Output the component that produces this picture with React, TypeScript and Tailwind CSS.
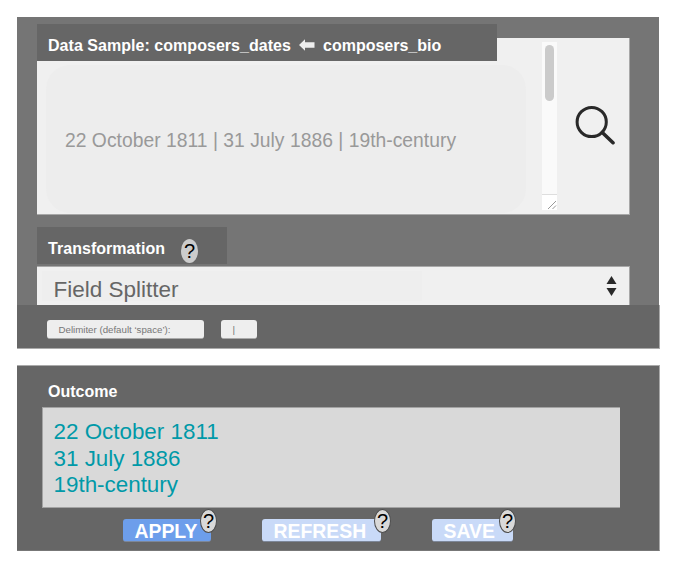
import type { ReactNode } from "react";

function HelpBadge({ className = "" }: { className?: string }) {
  return (
    <button
      aria-label="Help"
      className={`flex h-6 w-[17px] items-center justify-center rounded-[50%] text-[20px] leading-none text-black ${className}`}
    >
      ?
    </button>
  );
}

function ActionButton({
  children,
  className,
  badgeClass,
}: {
  children: ReactNode;
  className: string;
  badgeClass: string;
}) {
  return (
    <div className={`relative h-[23px] rounded-[3px] border-b border-[#7d8798] pl-[11.5px] ${className}`}>
      <span className="block text-[19.4px] font-bold leading-[24px] text-white">{children}</span>
      <HelpBadge className={`absolute -top-[10px] border border-[#4d4d4d] bg-[#d9d9d9] ${badgeClass}`} />
    </div>
  );
}

function Scrollbar() {
  return (
    <div className="flex h-[168px] w-[15px] flex-col bg-[#fafafa]">
      <div className="mx-[3px] mt-[3px] h-14 w-[9px] rounded-full bg-[#cbcbcb]" />
      <div className="mt-auto h-4 border-t border-[#dedede] bg-white">
        <svg className="ml-[5px] mt-[5px]" width="10" height="10" viewBox="0 0 10 10" stroke="#999" strokeWidth="1">
          <path d="M1 9 9 1M5.5 9 9 5.5" />
        </svg>
      </div>
    </div>
  );
}

export default function App() {
  return (
    <main className="h-[574px] w-[700px] overflow-hidden bg-white pl-[17px] pt-[17px] font-['Liberation_Sans',Arial,sans-serif]">
      <section className="flex h-[332px] w-[642px] flex-col bg-[#757575]">
        <h2 className="relative z-10 ml-[19.5px] mt-[7px] flex h-[37px] w-[460px] shrink-0 items-center bg-[#666] pl-[11.5px] pt-[6px] text-[16px] font-bold leading-5 text-white">
          <span className="tracking-[0.04px]">Data Sample: composers_dates</span>
          <svg className="ml-[8px] -mt-[2px]" width="16" height="12" viewBox="0 0 16 12">
            <path d="M0 6 6 0.3V3.2H15.5V8.8H6V11.7Z" fill="#eee" />
          </svg>
          <span className="ml-[8px]">composers_bio</span>
        </h2>
        <div className="-mt-[23px] ml-5 flex h-[177px] w-[593px] shrink-0 border-b border-r border-[#a8a8a8] bg-[#f0f0f0]">
          <div className="ml-[9px] mt-[27px] flex h-[148px] w-[480px] items-center rounded-[24px] bg-[#ededed] pl-[19px] text-[19.3px] leading-6 text-[#999]">
            <p className="mt-[3px] whitespace-nowrap tracking-[0.02px]">22 October 1811 | 31 July 1886 | 19th-century</p>
          </div>
          <div className="ml-[16px] mt-[4px]">
            <Scrollbar />
          </div>
          <svg className="ml-[18px] mt-[67px]" width="40" height="40" viewBox="0 0 40 40" fill="none" stroke="#292929" strokeWidth="3">
            <circle cx="16.7" cy="17" r="14.6" />
            <path d="M27.3 27.5 38 37.7" strokeWidth="3.6" strokeLinecap="round" />
          </svg>
        </div>
        <h2 className="ml-[19.5px] mt-[12px] flex h-[37px] w-[190.5px] shrink-0 items-center bg-[#666] pl-[11.5px] text-[16px] font-bold leading-5 text-white">
          <span className="mt-[6px] tracking-[0.04px]">Transformation</span>
          <HelpBadge className="ml-[16px] mt-[10px] bg-[#ccc] font-normal" />
        </h2>
        <div className="ml-5 mt-[2px] flex h-[39px] w-[593px] shrink-0 items-center border-r border-t border-[#a8a8a8] bg-[#f0f0f0]">
          <div className="ml-[5px] flex h-[30px] w-[380px] items-center bg-[#eee] pl-[11.5px] text-[22.5px] leading-6 text-[#666]">
            <span className="mt-[8px]">Field Splitter</span>
          </div>
          <svg className="ml-[184px]" width="11" height="20" viewBox="0 0 11 20" fill="#292929">
            <path d="M5.5 0 10.5 8H0.5ZM5.5 20 10.5 12H0.5Z" />
          </svg>
        </div>
        <div className="flex h-11 w-[643px] shrink-0 border-b border-r border-[#aaa] bg-[#666] pl-[29.5px] pt-[14.5px] text-[9.7px] leading-[19px] text-[#777]">
          <label className="h-[19px] w-[157.5px] rounded-[3px] border-b border-[#aaa] bg-[#eee] pl-3">Delimiter (default ‘space’):</label>
          <div className="ml-[16.5px] h-[19px] w-[36.5px] rounded-[3px] border-b border-[#aaa] bg-[#eee] pl-3">|</div>
        </div>
      </section>

      <section className="mt-4 h-[186px] w-[643px] border border-l-0 border-[#aaa] border-b-[#777] bg-[#666]">
        <h2 className="h-[41px] pl-[31px] pt-[16px] text-[16px] font-bold leading-5 text-white">Outcome</h2>
        <div className="ml-[25px] h-[101px] w-[578px] border border-r-0 border-[#a3a3a3] bg-[#d9d9d9] pl-[10.5px] pt-[11px] text-[22.4px] leading-[26.6px] text-[#0099a8]">
          <p>22 October 1811</p>
          <p>31 July 1886</p>
          <p>19th-century</p>
        </div>
        <div className="ml-[106px] mt-[11px] flex">
          <ActionButton className="w-[88px] bg-[#6d9eeb]" badgeClass="left-[77px]">APPLY</ActionButton>
          <ActionButton className="ml-[51px] w-[119px] bg-[#c9daf8]" badgeClass="left-[112px]">REFRESH</ActionButton>
          <ActionButton className="ml-[51px] w-[81px] bg-[#c9daf8]" badgeClass="left-[67px]">SAVE</ActionButton>
        </div>
      </section>
    </main>
  );
}
